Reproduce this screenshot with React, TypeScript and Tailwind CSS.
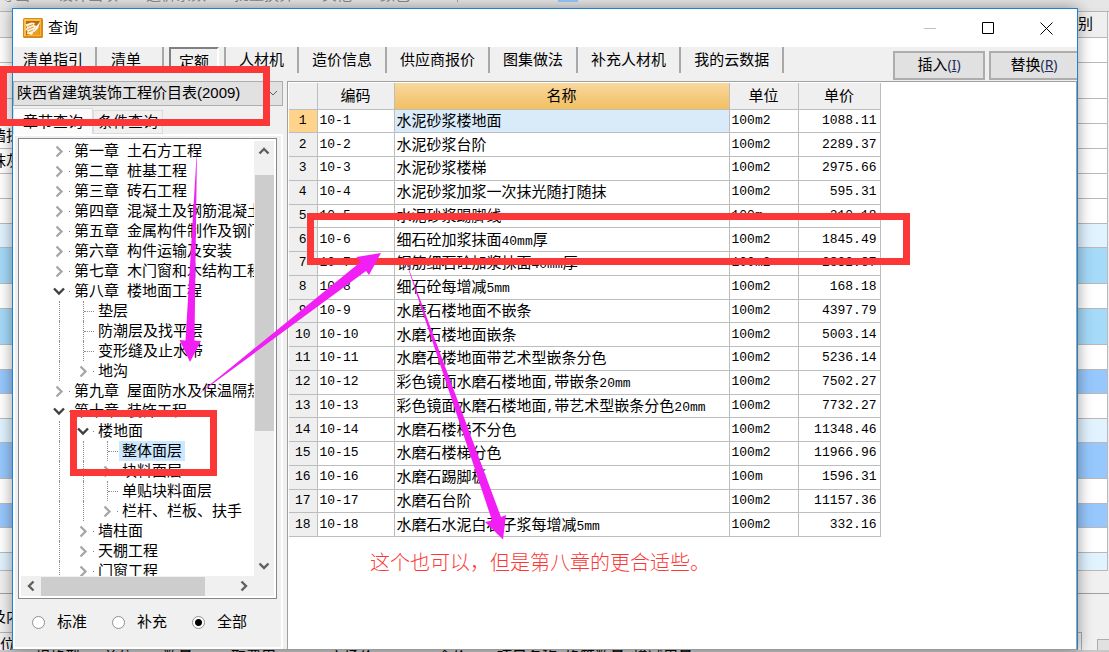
import type { ReactNode } from "react";

type TreeItem = {
  level: 0 | 1 | 2;
  state: "open" | "closed" | "leaf";
  label: string;
  chapter?: string;
  selected?: boolean;
};

const tabs = [
  { name: "清单指引", box: "pl-2.5 pr-3 border-r-2" },
  { name: "清单", box: "pl-3.5 pr-[21px] border-r-2" },
  { name: "定额", active: true, box: "" },
  { name: "人材机", box: "px-[13px] border-r-2" },
  { name: "造价信息", box: "px-[13px] border-r-2" },
  { name: "供应商报价", box: "px-[13px] border-r-2" },
  { name: "图集做法", box: "px-[13px] border-r-2" },
  { name: "补充人材机", box: "px-[13px] border-r-2" },
  { name: "我的云数据", box: "px-[13px] border-r-2" },
];

const tree: TreeItem[] = [
  { level: 0, state: "closed", chapter: "第一章", label: "土石方工程" },
  { level: 0, state: "closed", chapter: "第二章", label: "桩基工程" },
  { level: 0, state: "closed", chapter: "第三章", label: "砖石工程" },
  { level: 0, state: "closed", chapter: "第四章", label: "混凝土及钢筋混凝土" },
  { level: 0, state: "closed", chapter: "第五章", label: "金属构件制作及钢门窗" },
  { level: 0, state: "closed", chapter: "第六章", label: "构件运输及安装" },
  { level: 0, state: "closed", chapter: "第七章", label: "木门窗和木结构工程" },
  { level: 0, state: "open", chapter: "第八章", label: "楼地面工程" },
  { level: 1, state: "leaf", label: "垫层" },
  { level: 1, state: "leaf", label: "防潮层及找平层" },
  { level: 1, state: "leaf", label: "变形缝及止水带" },
  { level: 1, state: "closed", label: "地沟" },
  { level: 0, state: "closed", chapter: "第九章", label: "屋面防水及保温隔热" },
  { level: 0, state: "open", chapter: "第十章", label: "装饰工程" },
  { level: 1, state: "open", label: "楼地面" },
  { level: 2, state: "leaf", label: "整体面层", selected: true },
  { level: 2, state: "closed", label: "块料面层" },
  { level: 2, state: "leaf", label: "单贴块料面层" },
  { level: 2, state: "closed", label: "栏杆、栏板、扶手" },
  { level: 1, state: "closed", label: "墙柱面" },
  { level: 1, state: "closed", label: "天棚工程" },
  { level: 1, state: "closed", label: "门窗工程" },
];

const rows = [
  ["10-1", "水泥砂浆楼地面", "100m2", "1088.11"],
  ["10-2", "水泥砂浆台阶", "100m2", "2289.37"],
  ["10-3", "水泥砂浆楼梯", "100m2", "2975.66"],
  ["10-4", "水泥砂浆加浆一次抹光随打随抹", "100m2", "595.31"],
  ["10-5", "水泥砂浆踢脚线", "100m", "310.18"],
  ["10-6", "细石砼加浆抹面40mm厚", "100m2", "1845.49"],
  ["10-7", "钢筋细石砼加浆抹面40mm厚", "100m2", "2832.87"],
  ["10-8", "细石砼每增减5mm", "100m2", "168.18"],
  ["10-9", "水磨石楼地面不嵌条", "100m2", "4397.79"],
  ["10-10", "水磨石楼地面嵌条", "100m2", "5003.14"],
  ["10-11", "水磨石楼地面带艺术型嵌条分色", "100m2", "5236.14"],
  ["10-12", "彩色镜面水磨石楼地面,带嵌条20mm", "100m2", "7502.27"],
  ["10-13", "彩色镜面水磨石楼地面,带艺术型嵌条分色20mm", "100m2", "7732.27"],
  ["10-14", "水磨石楼梯不分色", "100m2", "11348.46"],
  ["10-15", "水磨石楼梯分色", "100m2", "11966.96"],
  ["10-16", "水磨石踢脚板", "100m", "1596.31"],
  ["10-17", "水磨石台阶", "100m2", "11157.36"],
  ["10-18", "水磨石水泥白石子浆每增减5mm", "100m2", "332.16"],
];

// rows of the main window's grid that stick out beside the dialog
const backRows = [
  { cls: "h-[26px] bg-[#efefef]", right: "别" },
  { cls: "h-[25px] bg-white" },
  { cls: "h-[36px] bg-white" },
  { cls: "h-[25px] bg-white" },
  { cls: "h-[25px] bg-white", left: "墙抹" },
  { cls: "h-[25px] bg-white", left: "抹灰" },
  { cls: "h-[25px] bg-white" },
  { cls: "h-[25px] bg-white" },
  { cls: "h-[24px] bg-[#e1f3ff]" },
  { cls: "h-[36px] bg-[#a6daf9]" },
  { cls: "h-[25px] bg-white" },
  { cls: "h-[36px] bg-[#a6daf9]" },
  { cls: "h-[25px] bg-white" },
  { cls: "h-[24px] bg-[#97c8fd]" },
  { cls: "h-[25px] bg-white" },
  { cls: "h-[24px] bg-[#e1f3ff]" },
  { cls: "h-[36px] bg-[#97c8fd]" },
  { cls: "h-[25px] bg-white" },
  { cls: "h-[24px] bg-[#97c8fd]" },
  { cls: "h-[25px] bg-white" },
  { cls: "h-[18px] bg-[#e1f3ff]" },
];

const mono = "font-['Liberation_Mono','Noto_Sans_CJK_SC',monospace] text-[13px]";

// latin runs are set in the narrow mono face, the rest in the CJK one
const Mixed = ({ text }: { text: string }) => (
  <>
    {text.split(/([\x20-\x7e]+)/).map((part, i) =>
      i % 2 ? <span key={i} className={`leading-none ${mono}`}>{part}</span> : part
    )}
  </>
);

const BackStrip = ({ side }: { side: "left" | "right" }) => (
  <div className={side === "left" ? "w-3 shrink-0 overflow-hidden" : "w-[31px] shrink-0 overflow-hidden"}>
    <div className="h-1 border-b border-[#b4b4b4] bg-[#e4e4e4]" />
    {backRows.map((r, i) => (
      <div
        key={i}
        className={`flex items-center overflow-hidden whitespace-nowrap border-b border-[#b9b9b9] ${r.cls} ${
          side === "right" ? "mr-px border-r justify-start" : "justify-center"
        }`}
      >
        {side === "left" ? r.left : r.right}
      </div>
    ))}
    <div className="h-[23px] border-b border-[#a0a0a0]" />
    {side === "left" && (
      <>
        <div className="flex h-[39px] items-center justify-center whitespace-nowrap border-b border-[#b4b4b4] pt-2">及内</div>
        <div className="whitespace-nowrap leading-6">位</div>
      </>
    )}
    {side === "right" && (
      <div className="flex items-end justify-between pt-[38px]">
        <div className="h-[19px] w-1 border-r border-t border-[#adadad]" />
        <div className="h-3 w-3 border-l border-t border-[#adadad] bg-[#e1e1e1]" />
      </div>
    )}
  </div>
);

const Twisty = ({ state }: { state: TreeItem["state"] }) => {
  if (state === "leaf") {
    return (
      <div className="h-5 w-6 shrink-0 pl-3">
        <div className="h-5 border-l border-dotted border-[#8c8c8c]">
          <div className="h-[11px] w-2.5 border-b border-dotted border-[#8c8c8c]" />
        </div>
      </div>
    );
  }
  return (
    <svg className="h-5 w-6 shrink-0" viewBox="0 0 24 20" fill="none">
      {state === "open" ? (
        <path d="M7 7.5l5 5 5-5" stroke="#404040" strokeWidth="2.4" />
      ) : (
        <path d="M9.500 5.500l5 5-5 5" stroke="#a6a6a6" strokeWidth="2.3" />
      )}
      <rect x="22" y="10" width="1" height="1" fill="#808080" />
    </svg>
  );
};

const TreeRow = ({ item }: { item: TreeItem }) => (
  <li className="flex h-5 items-center whitespace-nowrap">
    {Array.from({ length: item.level }, (_, i) => (
      <div key={i} className="h-5 w-6 shrink-0 pl-3">
        <div className="h-5 border-l border-dotted border-[#8c8c8c]" />
      </div>
    ))}
    <Twisty state={item.state} />
    <span className={`flex h-5 shrink-0 items-center gap-2 px-[3px] ${item.selected ? "bg-[#cce8ff]" : ""}`}>
      {item.chapter && <span>{item.chapter}</span>}
      <span>{item.label}</span>
    </span>
  </li>
);

const ScrollButton = ({ label, d }: { label: string; d: string }) => (
  <button type="button" aria-label={label} className="flex size-5 shrink-0 items-center justify-center">
    <svg className="size-3" viewBox="0 0 12 12" fill="none" stroke="#606060" strokeWidth="2.4">
      <path d={d} />
    </svg>
  </button>
);

const WindowButton = ({ label, children }: { label: string; children: ReactNode }) => (
  <button type="button" aria-label={label} className="flex h-full w-[58px] items-center justify-center">
    <svg className="size-[13px]" viewBox="0 0 13 13" fill="none" stroke="#000">
      {children}
    </svg>
  </button>
);

const AppIcon = () => (
  <svg className="size-5 shrink-0" viewBox="0 0 20 20">
    <rect width="20" height="20" rx="1.5" fill="#d98a1c" />
    <path d="M1 1h17v2H3v15H1z" fill="#f7c04a" />
    <path d="M18 2v16H3l1-1h12.500V3z" fill="#fbb524" />
    <path d="M3 3h13.500v14H3z" fill="#c06a10" />
    <path d="M9 17l7.500-10v10z" fill="#e8a02a" />
    <path d="M2.500 6.500l6-2 3.500.5-1 2 2.500 1-2 3-1 3.500-1.500 2.500-5-1 .5-3-2-1.500 1.500-2z" fill="#fff4d6" />
    <path d="M4.500 8.500l5.500-2M4.500 11.500l6-2.500M5.500 14l4.500-2" stroke="#d08a30" strokeWidth=".9" fill="none" />
    <path d="M17.500 3.500l-4.500 5-2.500 5 1 .5 3.500-4z" fill="#fff" />
  </svg>
);

const Annotations = () => (
  <>
    <div className="absolute left-0 top-[66px] h-[60px] w-[270px] border-[7px] border-[#fc3737]" />
    <div className="absolute left-[307px] top-[213px] h-[52px] w-[603px] border-[7px] border-[#fc3737]" />
    <div className="absolute left-[70px] top-[410px] h-[66px] w-[147px] border-[7px] border-[#fc3737]" />
    <svg className="absolute left-0 top-0 h-[652px] w-[1109px]" viewBox="0 0 1109 652" fill="#f21ff5">
      <path d="M197 148l-2.500 192.500 6.500.5-11 21-10.500-22 6 .5z" />
      <path d="M196 396L360.500 262l-4-5 24.500-4-12 22-3-4z" />
      <path d="M404 256l97 261 5-2-3 24.500-18-17.500 7-1.500z" />
    </svg>
    <p className="absolute left-[370px] top-[549px] whitespace-nowrap text-xl font-light leading-7 text-[#fc3737]">
      这个也可以，但是第八章的更合适些。
    </p>
  </>
);

export default function App() {
  return (
    <div className="relative flex h-screen flex-col overflow-hidden bg-[#f0f0f0] font-['Liberation_Sans','Noto_Sans_CJK_SC',sans-serif] text-[15px] text-black">
      <div className="flex h-2 shrink-0 items-start bg-[#e6e6e6] text-[#8a8a8a]">
        <div className="flex h-0.5 w-[457px] items-end gap-7 overflow-hidden whitespace-nowrap leading-[14px]">
          <span>导出</span>
          <span>设计出项</span>
          <span>造价系数</span>
          <span>批量换算</span>
          <span>其他</span>
          <span>颜色</span>
        </div>
        <div className="h-0.5 w-[101px] border-l border-[#a0a0a0]" />
        <div className="h-0.5 w-5 bg-[#97c8fd]" />
      </div>

      <div className="flex min-h-0 flex-1">
        <BackStrip side="left" />

        <main className="relative flex min-w-0 flex-1 flex-col border border-[#1883d7] border-b-[#9a9a9a] bg-[#f0f0f0] shadow-[0_0_14px_rgba(0,0,0,0.4)]">
          <header className="flex h-[38px] shrink-0 items-center bg-white pl-2.5 pr-0.5">
            <AppIcon />
            <h1 className="flex-1 pl-[5px]">查询</h1>
            <WindowButton label="最小化"><path d="M0 6.500h12" stroke="#c0c0c0" /></WindowButton>
            <WindowButton label="最大化"><path d="M.5.5h11v11H.5z" /></WindowButton>
            <WindowButton label="关闭"><path d="M.5.5l12 12M12.500.5l-12 12" /></WindowButton>
          </header>

          <div className="flex h-[34px] shrink-0 items-start">
            <nav className="flex h-[26px] whitespace-nowrap">
              {tabs.map((t) =>
                t.active ? (
                  <div key={t.name} className="border-r-2 border-[#a8a8a8] px-[5px]">
                    <button type="button" className="h-full border-2 border-[#808080] border-b-white border-r-white px-2 pt-0.5">{t.name}</button>
                  </div>
                ) : (
                  <button key={t.name} type="button" className={`border-[#a8a8a8] ${t.box}`}>{t.name}</button>
                )
              )}
            </nav>
            <div className="ml-auto flex gap-1 pt-1">
              <button type="button" className="h-[29px] w-[92px] border-2 border-[#adadad] bg-[#e1e1e1]">
                插入<span className="font-['Noto_Sans'] text-sm leading-none text-[#1f2d5c]">(<u>I</u>)</span>
              </button>
              <button type="button" className="h-[29px] w-[88px] border-2 border-r-0 border-[#adadad] bg-[#e1e1e1]">
                替换<span className="font-['Noto_Sans'] text-sm leading-none text-[#1f2d5c]">(<u>R</u>)</span>
              </button>
            </div>
          </div>

          <div className="flex min-h-0 flex-1">
            <aside className="flex w-[274px] shrink-0 flex-col pr-1">
              <div className="relative">
                <select aria-label="定额库" className="block h-[25px] w-full appearance-none border border-[#adadad] bg-[#e1e1e1] pl-[3px]">
                  <option>陕西省建筑装饰工程价目表(2009)</option>
                </select>
                <svg className="pointer-events-none absolute right-1 top-2 h-2 w-3" viewBox="0 0 12 8" fill="none" stroke="#606060">
                  <path d="M2 2l4 4 4-4" />
                </svg>
              </div>

              <div className="flex h-7 shrink-0 items-end">
                <button type="button" className="h-[26px] w-20 border border-b-0 border-[#dcdcdc] bg-[#fbfbfb] leading-6">章节查询</button>
                <button type="button" className="h-6 w-[70px] border border-[#dcdcdc] leading-5">条件查询</button>
              </div>

              <section className="flex min-h-0 flex-1 flex-col border-2 border-white pb-0.5 pl-[3px] pr-1 pt-0.5">
                <div className="flex min-h-0 flex-1 flex-col border border-[#828790] bg-white pl-0.5">
                  <div className="flex min-h-0 flex-1 pt-0.5">
                    <ul className="min-w-0 flex-1 overflow-hidden pl-[26px]">
                      {tree.map((item) => (
                        <TreeRow key={(item.chapter ?? "") + item.label} item={item} />
                      ))}
                    </ul>
                    <div className="mr-0.5 flex w-5 flex-col items-center bg-[#f0f0f0]">
                      <ScrollButton label="向上" d="M1.500 8.500L6 4l4.500 4.500" />
                      <div className="mt-3.5 h-64 w-[19px] bg-[#cdcdcd]" />
                      <div className="mt-auto">
                        <ScrollButton label="向下" d="M1.500 3.500L6 8l4.500-4.500" />
                      </div>
                    </div>
                  </div>
                  <div className="mb-0.5 mr-0.5 flex h-5 shrink-0 items-center bg-[#f0f0f0]">
                    <ScrollButton label="向左" d="M8.500 1.500L4 6l4.500 4.500" />
                    <div className="h-[19px] w-[164px] bg-[#cdcdcd]" />
                    <div className="ml-auto mr-5">
                      <ScrollButton label="向右" d="M3.500 1.500L8 6l-4.500 4.500" />
                    </div>
                  </div>
                </div>

                <div className="flex h-[46px] shrink-0 items-center gap-[25px] pl-3.5">
                  {["标准", "补充", "全部"].map((name) => (
                    <label key={name} className="flex items-center gap-3">
                      <input
                        type="radio"
                        name="scope"
                        defaultChecked={name === "全部"}
                        className="size-[13px] appearance-none rounded-full border border-[#909090] bg-white checked:bg-[radial-gradient(circle,#000_0,#000_3px,transparent_4px)]"
                      />
                      {name}
                    </label>
                  ))}
                </div>
              </section>
            </aside>

            <section className="min-w-0 flex-1 overflow-hidden border border-b-0 border-[#a0a0a0] bg-white pl-px pt-px">
              <table className="h-[454px] w-[591px] table-fixed border-collapse">
                <colgroup>
                  <col className="w-[28px]" />
                  <col className="w-[77px]" />
                  <col className="w-[335px]" />
                  <col className="w-[69px]" />
                  <col className="w-[82px]" />
                </colgroup>
                <thead>
                  <tr className="h-[26px] bg-[#efefef]">
                    <th className="border-b border-r border-[#bdbdbd]"></th>
                    <th className="border-b border-r border-[#bdbdbd] p-0 font-normal">编码</th>
                    <th className="border-b border-r border-[#bdbdbd] bg-linear-to-b from-[#f9d89c] to-[#f0bf60] p-0 font-normal">名称</th>
                    <th className="border-b border-r border-[#bdbdbd] p-0 font-normal">单位</th>
                    <th className="border-b border-r border-[#bdbdbd] p-0 font-normal">单价</th>
                  </tr>
                </thead>
                <tbody>
                  {rows.map(([code, name, unit, price], i) => (
                    <tr key={code}>
                      <td className={`border border-l-0 border-[#bdbdbd] p-0 text-center leading-5 ${mono} ${i === 0 ? "bg-[#ffd48a]" : "bg-[#efefef]"}`}>{i + 1}</td>
                      <td className={`border border-[#bdbdbd] p-0 pl-0.5 leading-5 ${mono}`}>{code}</td>
                      <td className={`whitespace-nowrap border border-[#bdbdbd] p-0 pl-0.5 leading-5 ${i === 0 ? "bg-[#d9eaf8]" : ""}`}>
                        <Mixed text={name} />
                      </td>
                      <td className={`border border-[#bdbdbd] p-0 pl-0.5 leading-5 ${mono}`}>{unit}</td>
                      <td className={`border border-[#bdbdbd] p-0 pr-[3px] text-right leading-5 ${mono}`}>{price}</td>
                    </tr>
                  ))}
                </tbody>
              </table>
            </section>
          </div>
        </main>

        <BackStrip side="right" />
      </div>

      <div className="flex h-0.5 shrink-0 overflow-hidden whitespace-nowrap bg-[#c8c8c8] pl-[35px] leading-[13px]">
        <span className="w-[68px]">规格型</span>
        <span className="w-[60px]">单位</span>
        <span className="w-[68px]">数量</span>
        <span className="w-[98px]">取费用</span>
        <span className="w-[108px]">市场价</span>
        <span className="w-[60px]">合价</span>
        <span className="w-[68px]">项目名称</span>
        <span className="w-[68px]">换算数量</span>
        <span className="w-[68px]">增减用量</span>
      </div>

      <Annotations />
    </div>
  );
}
